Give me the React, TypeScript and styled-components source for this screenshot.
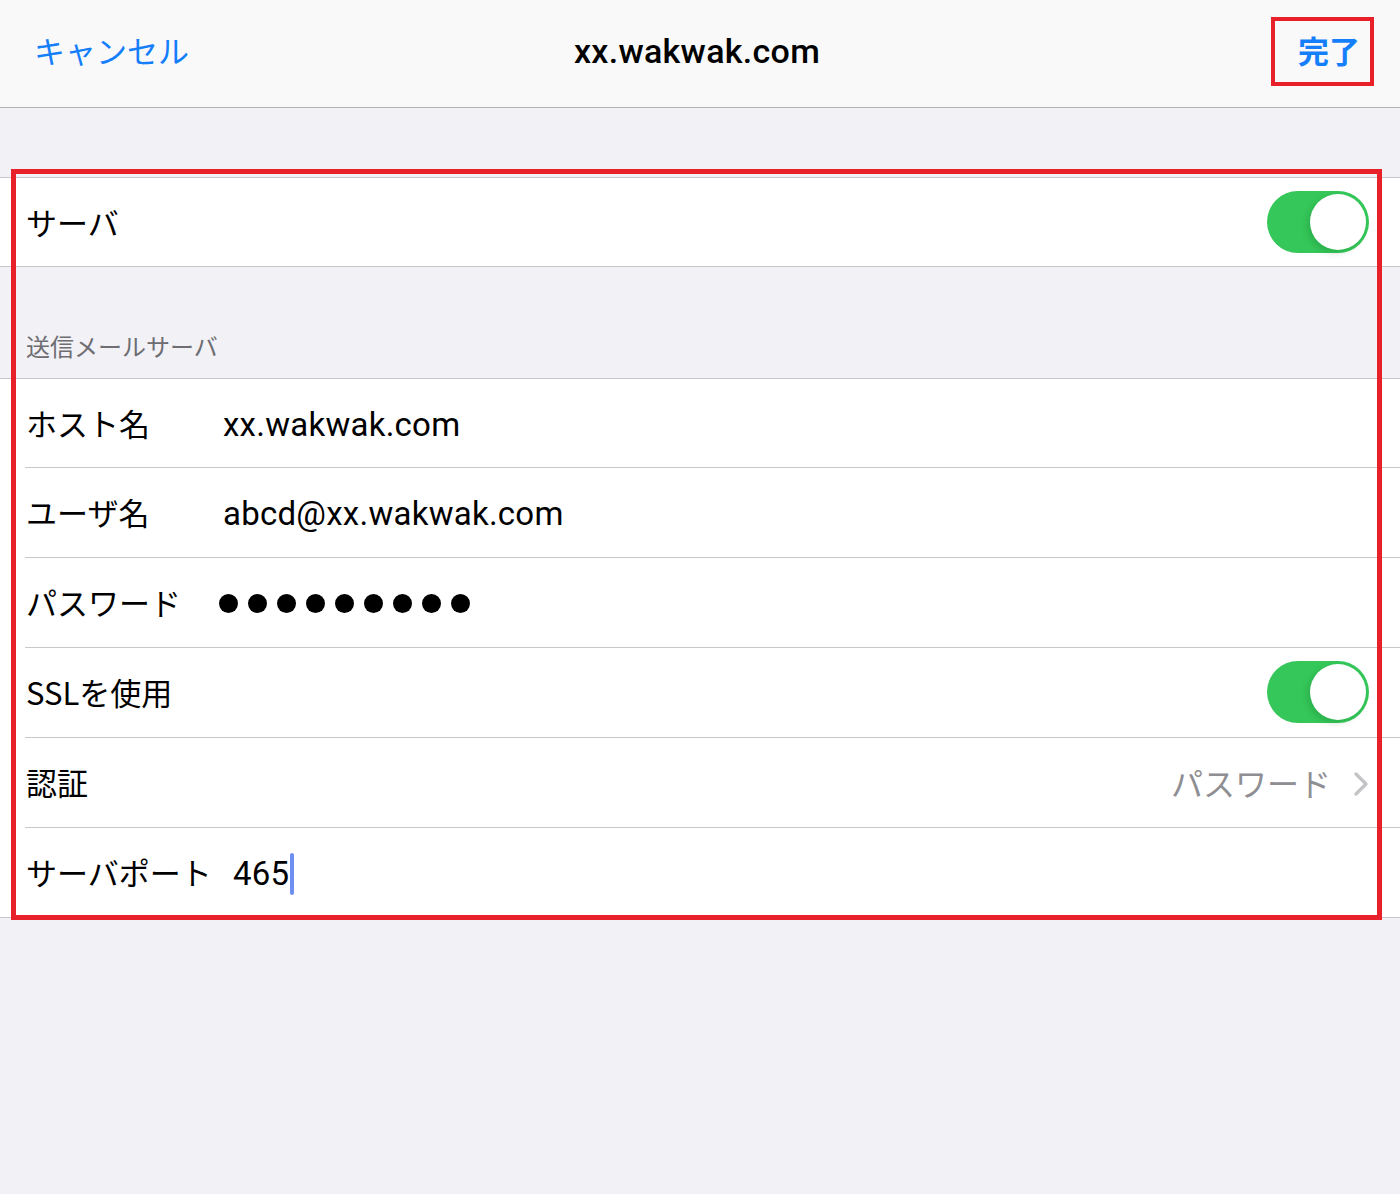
import React from "react";
import styled, { createGlobalStyle } from "styled-components";

const GlobalStyle = createGlobalStyle`
  html, body {
    margin: 0;
    padding: 0;
    background: #f1f1f6;
  }
  body {
    font-family: Roboto, "Noto Sans CJK JP", sans-serif;
    -webkit-font-smoothing: antialiased;
  }
`;

const Page = styled.div`
  position: relative;
  min-height: 1194px;
  background: #f1f1f6;
  color: #000;
`;

const NavBar = styled.header`
  height: 108px;
  box-sizing: border-box;
  background: #f9f9fa;
  border-bottom: 1px solid #b4b4b8;
  display: grid;
  grid-template-columns: 1fr auto 1fr;
  align-items: center;
  padding: 0 40px 9px 34px;
`;

const NavButton = styled.button<{ $bold?: boolean; $align: "start" | "end" }>`
  justify-self: ${(p) => p.$align};
  background: none;
  border: none;
  padding: 0;
  color: #147efb;
  font-family: "Noto Sans CJK JP", sans-serif;
  font-size: 31px;
  font-weight: ${(p) => (p.$bold ? 700 : 400)};
  line-height: 1;
  cursor: pointer;
`;

const Title = styled.h1`
  margin: 0;
  font-family: Roboto, "Noto Sans CJK JP", sans-serif;
  font-size: 34px;
  font-weight: 500;
  letter-spacing: 0.3px;
  line-height: 1;
  padding-top: 4px;
`;

const Spacer = styled.div<{ $h: number }>`
  height: ${(p) => p.$h}px;
`;

const Group = styled.section`
  background: #fff;
  border-top: 1px solid #c8c7cc;
  border-bottom: 1px solid #c8c7cc;
`;

const SectionHeader = styled.div`
  height: 111px;
  box-sizing: border-box;
  display: flex;
  align-items: flex-end;
  padding: 0 0 15px 26px;
  font-family: "Noto Sans CJK JP", sans-serif;
  font-size: 24px;
  color: #6d6d72;
`;

const Row = styled.div<{ $last?: boolean; $h?: number }>`
  height: ${(p) => p.$h ?? 90}px;
  box-sizing: border-box;
  margin-left: 25px;
  padding: 0 31px 2px 0;
  display: flex;
  align-items: center;
  border-bottom: ${(p) => (p.$last ? "none" : "1px solid #c8c7cc")};
`;

const Label = styled.span<{ $w?: number }>`
  font-family: "Noto Sans CJK JP", sans-serif;
  font-size: 31px;
  padding-left: 1px;
  width: ${(p) => (p.$w ? `${p.$w}px` : "auto")};
  flex-shrink: 0;
  white-space: nowrap;
`;

const Value = styled.span`
  font-family: Roboto, "Noto Sans CJK JP", sans-serif;
  font-size: 33px;
  letter-spacing: 0.25px;
  display: flex;
  align-items: center;
  padding-top: 4px;
`;

const Push = styled.div`
  flex: 1;
`;

const Dots = styled.div`
  display: flex;
  gap: 10px;
  margin-left: -4px;
  margin-top: 4px;
`;

const Dot = styled.span`
  width: 19px;
  height: 19px;
  border-radius: 50%;
  background: #000;
`;

const Switch = styled.div`
  width: 102px;
  height: 62px;
  border-radius: 31px;
  background: #35c759;
  position: relative;
  flex-shrink: 0;
  margin-top: 1px;
`;

const Thumb = styled.span`
  position: absolute;
  top: 3px;
  right: 3px;
  width: 56px;
  height: 56px;
  border-radius: 50%;
  background: #fff;
  box-shadow: -3px 3px 6px rgba(0, 80, 20, 0.18);
`;

const Detail = styled.span`
  font-family: "Noto Sans CJK JP", sans-serif;
  font-size: 32px;
  color: #8e8e93;
  margin-right: 22px;
`;

const ChevronBox = styled.span`
  display: flex;
  margin-top: 4px;
`;

const Caret = styled.span`
  display: inline-block;
  width: 4px;
  height: 42px;
  border-radius: 2px;
  background: #6f8ff3;
  margin-left: 1px;
`;

const Highlight = styled.div<{ $x: number; $y: number; $w: number; $h: number; $t: number }>`
  position: absolute;
  left: ${(p) => p.$x}px;
  top: ${(p) => p.$y}px;
  width: ${(p) => p.$w}px;
  height: ${(p) => p.$h}px;
  box-sizing: border-box;
  border: ${(p) => p.$t}px solid #e8202a;
  pointer-events: none;
`;

const Toggle = () => (
  <Switch>
    <Thumb />
  </Switch>
);

const Chevron = () => (
  <ChevronBox>
    <svg width="16" height="26" viewBox="0 0 16 26">
      <polyline points="3,3 13,13 3,23" fill="none" stroke="#c4c4c8" strokeWidth="3.4" strokeLinecap="round" strokeLinejoin="round" />
    </svg>
  </ChevronBox>
);

export default function App() {
  return (
    <Page>
      <GlobalStyle />
      <NavBar>
        <NavButton $align="start">キャンセル</NavButton>
        <Title>xx.wakwak.com</Title>
        <NavButton $align="end" $bold>完了</NavButton>
      </NavBar>
      <Spacer $h={69} />
      <Group>
        <Row $last $h={88}>
          <Label>サーバ</Label>
          <Push />
          <Toggle />
        </Row>
      </Group>
      <SectionHeader>送信メールサーバ</SectionHeader>
      <Group>
        <Row $h={89}>
          <Label $w={197}>ホスト名</Label>
          <Value>xx.wakwak.com</Value>
        </Row>
        <Row>
          <Label $w={197}>ユーザ名</Label>
          <Value>abcd@xx.wakwak.com</Value>
        </Row>
        <Row>
          <Label $w={197}>パスワード</Label>
          <Dots>
            {Array.from({ length: 9 }).map((_, i) => (
              <Dot key={i} />
            ))}
          </Dots>
        </Row>
        <Row>
          <Label>SSLを使用</Label>
          <Push />
          <Toggle />
        </Row>
        <Row>
          <Label>認証</Label>
          <Push />
          <Detail>パスワード</Detail>
          <Chevron />
        </Row>
        <Row $last $h={89}>
          <Label $w={207}>サーバポート</Label>
          <Value>
            465
            <Caret />
          </Value>
        </Row>
      </Group>
      <Highlight $x={1271} $y={17} $w={103} $h={69} $t={4} />
      <Highlight $x={11} $y={169} $w={1371} $h={751} $t={5} />
    </Page>
  );
}
